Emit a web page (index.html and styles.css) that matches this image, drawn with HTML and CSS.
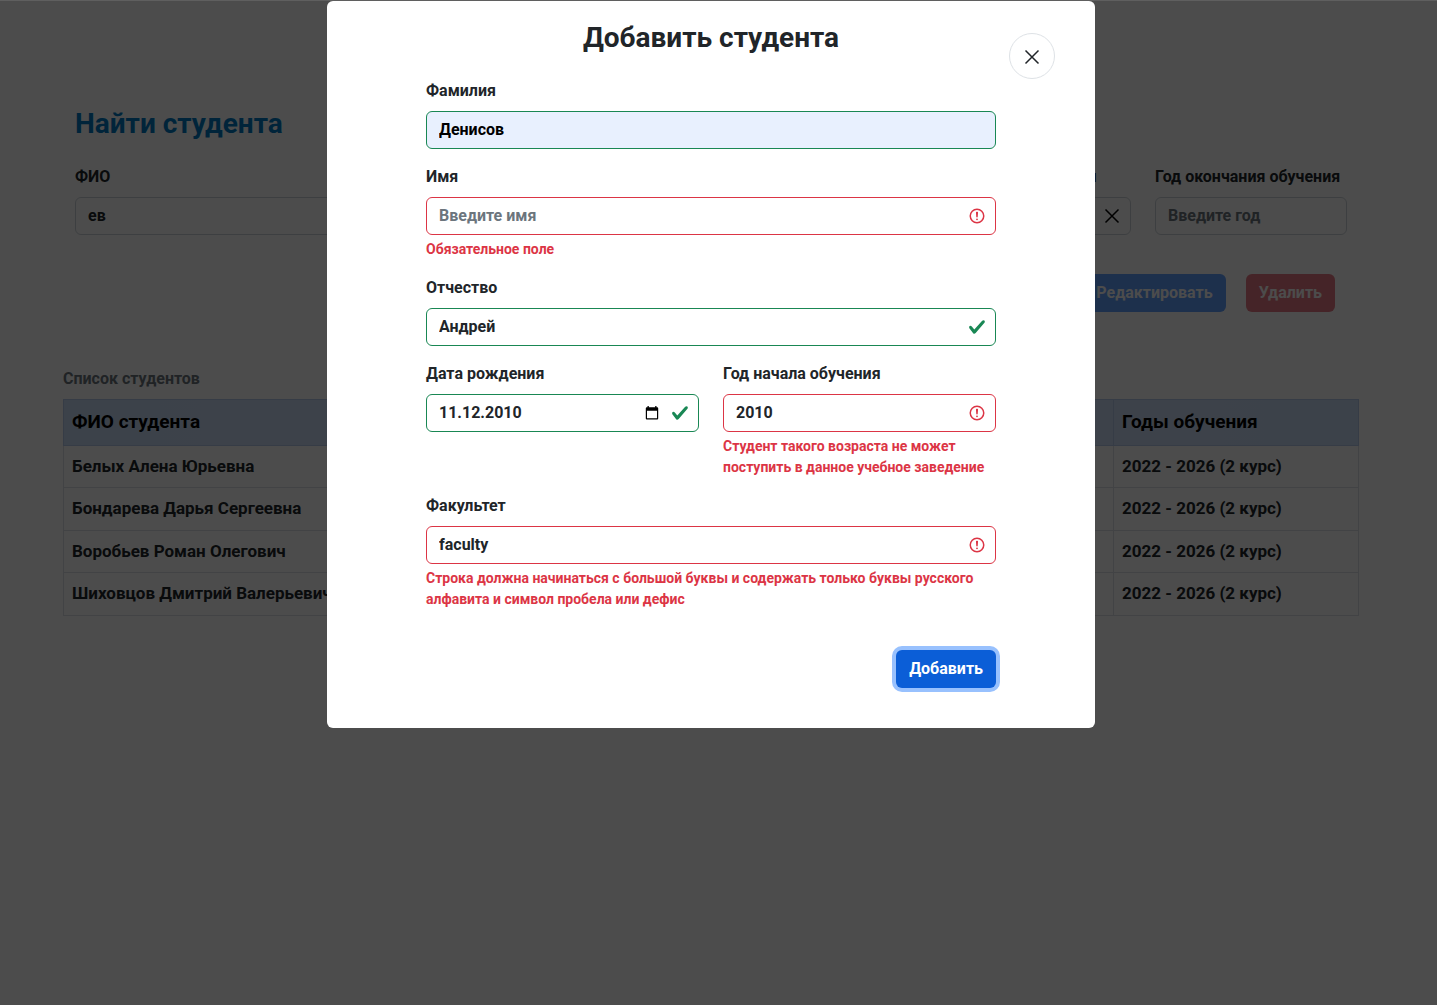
FILE: index.html
```html
<!DOCTYPE html>
<html lang="ru">
<head>
<meta charset="utf-8">
<meta name="viewport" content="width=device-width, initial-scale=1">
<title>Студенты</title>
<link rel="stylesheet" href="styles.css">
</head>
<body>
<svg class="sprite" aria-hidden="true">
  <symbol id="icon-error" viewBox="0 0 12 12">
    <circle cx="6" cy="6" r="4.5" fill="none" stroke="currentColor"/>
    <path d="M5.8 3.6h.4L6 6.5z" fill="none" stroke="currentColor" stroke-linejoin="round"/>
    <circle cx="6" cy="8.2" r=".6" fill="currentColor"/>
  </symbol>
  <symbol id="icon-valid" viewBox="0 0 8 8">
    <path fill="currentColor" d="M2.3 6.73.6 4.53c-.4-1.04.46-1.4 1.1-.8l1.1 1.4 3.4-3.8c.6-.63 1.6-.27 1.2.7l-4 4.6c-.43.5-.8.4-1.1.1z"/>
  </symbol>
  <symbol id="icon-close" viewBox="0 0 18 18">
    <path d="M2.5 2.5l13 13M15.5 2.5l-13 13" fill="none" stroke="currentColor" stroke-width="1.5"/>
  </symbol>
  <symbol id="icon-calendar" viewBox="0 0 16 16">
    <path fill="currentColor" fill-rule="evenodd" d="M3.5 1h1.3v1.3h6.4V1h1.3v1.3h.7a1 1 0 0 1 1 1v10.2a1 1 0 0 1-1 1H2.8a1 1 0 0 1-1-1V3.3a1 1 0 0 1 1-1h.7zM3 5.7v7.6h10V5.7z"/>
  </symbol>
</svg>

<main class="page">
  <section class="search">
    <h1 class="search-title">Найти студента</h1>
    <form class="filters">
      <div class="field filter-name">
        <label for="search-name">ФИО</label>
        <div class="control"><input id="search-name" type="text" value="ев"></div>
      </div>
      <div class="field filter-start">
        <label for="search-start">Год начала обучения</label>
        <div class="control">
          <input id="search-start" type="text" value="2022">
          <button class="icon-button" type="button" aria-label="Очистить"><svg class="icon"><use href="#icon-close"/></svg></button>
        </div>
      </div>
      <div class="field filter-end">
        <label for="search-end">Год окончания обучения</label>
        <div class="control"><input id="search-end" type="text" placeholder="Введите год"></div>
      </div>
    </form>
    <div class="actions">
      <button class="button button-primary" type="button" disabled>Редактировать</button>
      <button class="button button-danger" type="button" disabled>Удалить</button>
    </div>
  </section>

  <table class="students">
    <caption>Список студентов</caption>
    <colgroup><col><col class="col-mid"><col class="col-years"></colgroup>
    <thead>
      <tr><th scope="col">ФИО студента</th><td></td><th scope="col">Годы обучения</th></tr>
    </thead>
    <tbody>
      <tr><td>Белых Алена Юрьевна</td><td></td><td>2022 - 2026 (2 курс)</td></tr>
      <tr><td>Бондарева Дарья Сергеевна</td><td></td><td>2022 - 2026 (2 курс)</td></tr>
      <tr><td>Воробьев Роман Олегович</td><td></td><td>2022 - 2026 (2 курс)</td></tr>
      <tr><td>Шиховцов Дмитрий Валерьевич</td><td></td><td>2022 - 2026 (2 курс)</td></tr>
    </tbody>
  </table>
</main>

<div class="overlay">
  <div class="modal" role="dialog" aria-modal="true" aria-labelledby="modal-title">
    <button class="modal-close" type="button" aria-label="Закрыть"><svg class="icon"><use href="#icon-close"/></svg></button>
    <h2 class="modal-title" id="modal-title">Добавить студента</h2>
    <form class="student-form">
      <div class="field">
        <label for="surname">Фамилия</label>
        <div class="control valid autofilled"><input id="surname" type="text" value="Денисов"></div>
      </div>
      <div class="field">
        <label for="name">Имя</label>
        <div class="control invalid">
          <input id="name" type="text" placeholder="Введите имя" aria-describedby="name-error">
          <svg class="icon"><use href="#icon-error"/></svg>
        </div>
        <p class="error" id="name-error">Обязательное поле</p>
      </div>
      <div class="field">
        <label for="patronymic">Отчество</label>
        <div class="control valid">
          <input id="patronymic" type="text" value="Андрей">
          <svg class="icon"><use href="#icon-valid"/></svg>
        </div>
      </div>
      <div class="field-row">
        <div class="field">
          <label for="birthday">Дата рождения</label>
          <div class="control valid">
            <input id="birthday" type="text" value="11.12.2010">
            <button class="icon-button calendar" type="button" aria-label="Выбрать дату"><svg class="icon-small"><use href="#icon-calendar"/></svg></button>
            <svg class="icon"><use href="#icon-valid"/></svg>
          </div>
        </div>
        <div class="field">
          <label for="start">Год начала обучения</label>
          <div class="control invalid">
            <input id="start" type="text" value="2010" aria-describedby="start-error">
            <svg class="icon"><use href="#icon-error"/></svg>
          </div>
          <p class="error" id="start-error">Студент такого возраста не может поступить в данное учебное заведение</p>
        </div>
      </div>
      <div class="field">
        <label for="faculty">Факультет</label>
        <div class="control invalid">
          <input id="faculty" type="text" value="faculty" aria-describedby="faculty-error">
          <svg class="icon"><use href="#icon-error"/></svg>
        </div>
        <p class="error" id="faculty-error">Строка должна начинаться с большой буквы и содержать только буквы русского алфавита и символ пробела или дефис</p>
      </div>
      <button class="button button-primary submit" type="submit">Добавить</button>
    </form>
  </div>
</div>
</body>
</html>
```
FILE: styles.css
```css
* { box-sizing: border-box; }

body {
  margin: 0;
  padding-right: 15px;
  background: #fff;
  color: #212529;
  font: 700 16px/24px Roboto, "Liberation Sans", sans-serif;
}

h1, h2, p { margin: 0; }
input, button { font: inherit; color: inherit; }
.sprite { position: absolute; width: 0; height: 0; }

.page {
  max-width: 1296px;
  margin: 0 auto;
  padding-top: 107px;
}

.search { padding: 0 12px; }

.search-title {
  margin-bottom: 24px;
  color: #007bc4;
  font-size: 28px;
  line-height: 34px;
}

.filters {
  display: grid;
  grid-template-columns: repeat(12, 1fr);
  gap: 24px;
}
.filter-name { grid-column: 1 / span 5; }
.filter-start { grid-column: 9 / span 2; }
.filter-end { grid-column: 11 / span 2; }

.field {
  display: flex;
  flex-direction: column;
  min-width: 0;
}
.field label {
  margin-bottom: 8px;
  white-space: nowrap;
}

.control {
  display: flex;
  align-items: center;
  height: 38px;
  padding: 0 9px 0 12px;
  border: 1px solid #ced4da;
  border-radius: 6px;
}
.control input {
  flex: 1;
  min-width: 0;
  padding: 0;
  border: 0;
  outline: 0;
  background: none;
}
.control input::placeholder { color: #6c757d; opacity: 1; }
.valid { border-color: #198754; }
.invalid { border-color: #dc3545; }
.valid > .icon { color: #198754; }
.invalid > .icon { color: #dc3545; }
.autofilled { background: #e8f0fe; color: #000; }

.icon { flex: none; width: 18px; height: 18px; }
.icon-small { width: 16px; height: 16px; }
.icon-button {
  display: flex;
  padding: 0;
  border: 0;
  background: none;
  color: #000;
}
.calendar { margin-right: 11px; }

.error {
  margin-top: 4px;
  color: #dc3545;
  font-size: 14px;
  line-height: 21px;
}

.actions {
  display: flex;
  justify-content: flex-end;
  gap: 20px;
  padding: 39px 12px 47px;
}

.button {
  height: 38px;
  padding: 0 13px;
  border: 0;
  border-radius: 6px;
  color: #fff;
}
.button-primary { background: #0d6efd; }
.button-danger { background: #dc3545; }
.button:disabled { opacity: .65; }

.students {
  width: 100%;
  table-layout: fixed;
  border-collapse: collapse;
  font-size: 17px;
  line-height: 1.5;
}
.students caption {
  padding: 8px 0;
  color: #6c757d;
  font-size: 16px;
  text-align: left;
}
.students th, .students td {
  padding: 8px;
  border: 1px solid #dee2e6;
  text-align: left;
  white-space: nowrap;
}
.students thead tr { background: linear-gradient(90deg, #c8def7, #d6dcfa 50%, #c8def7); }
.students thead th, .students thead td {
  border-color: #b6c9ea;
  color: #000;
  font-size: 19px;
}
.col-mid { width: 500px; }
.col-years { width: 245px; }

.overlay {
  position: fixed;
  inset: 0;
  padding-right: 15px;
  border-top: 1px solid rgba(255, 255, 255, .1);
  overflow: auto;
  background: rgba(0, 0, 0, .7);
}

.modal {
  position: relative;
  max-width: 768px;
  margin: 0 auto;
  padding: 20px 99px 40px;
  border-radius: 6px;
  background: #fff;
}
.modal-title {
  margin-bottom: 24px;
  font-size: 28px;
  line-height: 34px;
  text-align: center;
}
.modal-close {
  position: absolute;
  top: 32px;
  right: 40px;
  display: flex;
  align-items: center;
  justify-content: center;
  width: 46px;
  height: 46px;
  padding: 2px 0 0;
  border: 1px solid #dee2e6;
  border-radius: 50%;
  background: #fff;
  color: #212529;
}

.student-form {
  display: flex;
  flex-direction: column;
  gap: 16px;
}
.field-row {
  display: grid;
  grid-template-columns: 1fr 1fr;
  gap: 24px;
}
.submit {
  align-self: flex-end;
  margin-top: 24px;
  background: #0b5ed7;
  box-shadow: 0 0 0 4px #98c1fe;
}
```
